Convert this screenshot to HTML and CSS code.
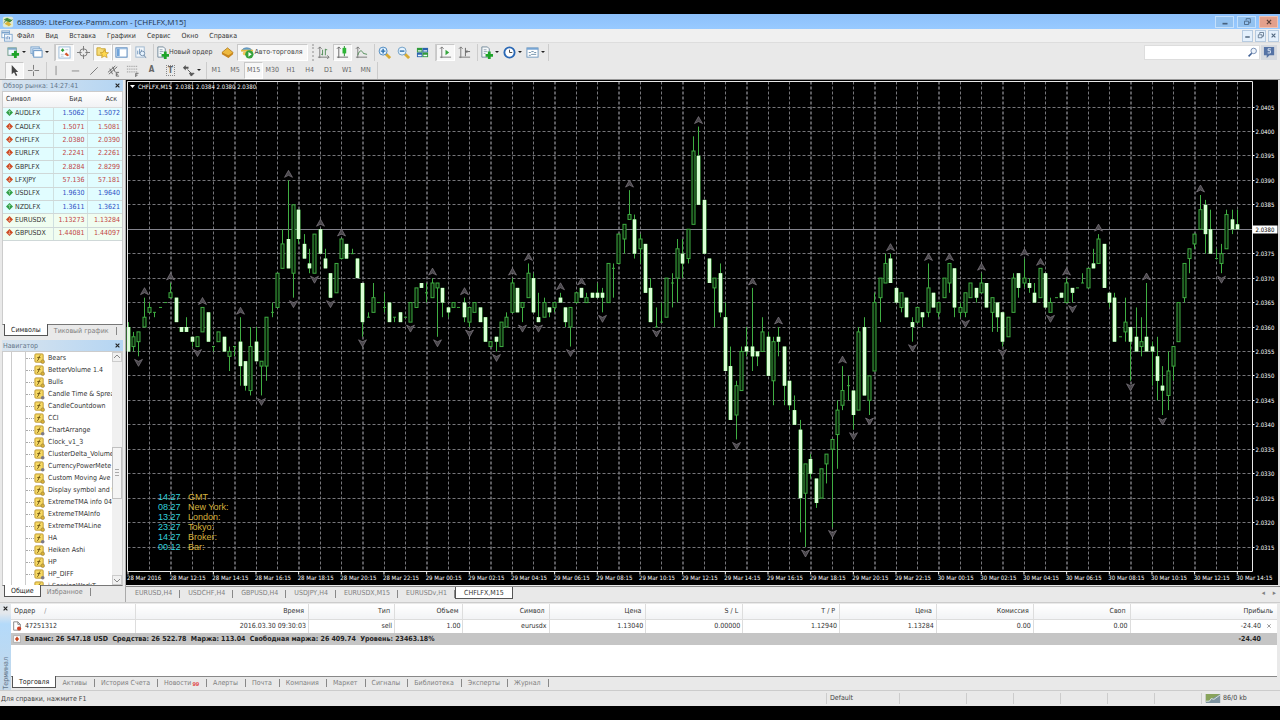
FILE: index.html
```html
<!DOCTYPE html>
<html lang="ru">
<head>
<meta charset="utf-8">
<title>688809: LiteForex-Pamm.com - [CHFLFX,M15]</title>
<link rel="stylesheet" href="styles.css">
</head>
<body>
<svg class="sprite" aria-hidden="true">
  <symbol id="logo" viewBox="0 0 14 14"><rect x="1" y="1" width="12" height="12" rx="2" fill="#dfe9d2"/><path d="M2 4l4-2 6 3-4 3z" fill="#4e9a3a"/><path d="M3 9l4-3 4 4-3 2z" fill="#d9b53a"/><path d="M2 8l4-4 3 3 3-3" fill="none" stroke="#3b6e3b"/></symbol>
  <symbol id="mdi" viewBox="0 0 14 14"><rect x="1" y="1" width="9" height="8" fill="#fff" stroke="#7ba3cc"/><path d="M1 3h9" stroke="#7ba3cc" stroke-width="2"/><rect x="4" y="5" width="9" height="8" fill="#f4f9ff" stroke="#7ba3cc"/><path d="M6 11V8m2 3V7m2 4V8" stroke="#5b87b8"/></symbol>
  <symbol id="newchart" viewBox="0 0 14 14"><rect x="1" y="2" width="9" height="8" fill="#eef6ff" stroke="#6c9a86"/><path d="M1 3h9" stroke="#7fa9c8" stroke-width="2"/><path d="M9 5v8M5 9h8" stroke="#1fa32a" stroke-width="3"/></symbol>
  <symbol id="profiles" viewBox="0 0 14 14"><rect x="1" y="1" width="9" height="7" fill="#dcebfa" stroke="#7ba3cc"/><rect x="3" y="3" width="9" height="7" fill="#e8f3fd" stroke="#7ba3cc"/><rect x="4" y="5" width="9" height="7" fill="#fff" stroke="#5f8fc0"/></symbol>
  <symbol id="market" viewBox="0 0 14 14"><rect x="1" y="1" width="12" height="12" fill="#fbfdff" stroke="#9bbbd8"/><path d="M3 4.500l2-2 2 2-2 2z" fill="#2f9e35"/><path d="M7 9l2-2 3 3-2 1z" fill="#d4572c"/><path d="M8 4h3M3 9h3M3 11h3" stroke="#b9cbd9"/></symbol>
  <symbol id="target" viewBox="0 0 14 14"><circle cx="7" cy="7" r="4" fill="none" stroke="#777"/><path d="M7 0v5M7 9v5M0 7h5M9 7h5" stroke="#777"/></symbol>
  <symbol id="folder" viewBox="0 0 14 14"><path d="M1 2h4l1 1h4v7H1z" fill="#f5dc78" stroke="#c9a22e"/><path d="M9 4l1.500 3 3 .3-2.300 2 .8 3.200L9 11l-3 1.500.8-3.200-2.300-2 3-.3z" fill="#ffd84d" stroke="#c08f1d" stroke-width=".7"/></symbol>
  <symbol id="terminal" viewBox="0 0 14 14"><rect x="1" y="2" width="12" height="10" fill="#fff" stroke="#4b7fb8"/><rect x="2" y="3" width="3" height="8" fill="#6fa3da"/><path d="M2 3h10" stroke="#86b1dd"/></symbol>
  <symbol id="tester" viewBox="0 0 14 14"><rect x="2" y="1" width="9" height="11" fill="#f4f8fc" stroke="#9bb5ce"/><path d="M4 9V5m2 4V3m2 4V4" stroke="#7196bb"/><circle cx="9" cy="8" r="2.500" fill="#e6f2fd" stroke="#7590ad"/><path d="M11 10l2 3" stroke="#7590ad"/></symbol>
  <symbol id="order" viewBox="0 0 14 14"><path d="M2 1h6l2 2v9H2z" fill="#f5f8fa" stroke="#72899b"/><path d="M4 4h3M4 6h4M4 8h2" stroke="#96a8b5"/><path d="M10 6v8M6 10h8" stroke="#1fa32a" stroke-width="3"/></symbol>
  <symbol id="book" viewBox="0 0 14 14"><path d="M1 7l6-5 6 5-5 5z" fill="#edb93f" stroke="#a8741a" stroke-width=".8"/><path d="M1 7l7 3 5-3v2l-5 4-7-4z" fill="#c8861e"/></symbol>
  <symbol id="auto" viewBox="0 0 14 14"><path d="M1 5c1-4 9-4 11 0z" fill="#6aa9d8" stroke="#40729b" stroke-width=".7"/><path d="M0 5h13" stroke="#e8bc42" stroke-width="2"/><circle cx="4" cy="8" r="2" fill="#f1c75b"/><circle cx="9" cy="9" r="4.500" fill="#37a23c"/><path d="M8 6.500v5l3.500-2.500z" fill="#fff"/></symbol>
  <symbol id="bars" viewBox="0 0 14 14"><path d="M3 1v12M1 12h12M1 3l2-2 2 2M11 10l2 2-2 2" fill="none" stroke="#777"/><path d="M6 4v6M4.500 9H6M9 3v7M9 4h2" stroke="#4f8a55" fill="none"/></symbol>
  <symbol id="candle" viewBox="0 0 14 14"><path d="M3 1v12M1 12h12M1 3l2-2 2 2" fill="none" stroke="#666"/><path d="M9 0v11" stroke="#1d8a25"/><rect x="7" y="2" width="4" height="6" fill="#2cb535"/></symbol>
  <symbol id="line" viewBox="0 0 14 14"><path d="M3 1v12M1 12h12M1 3l2-2 2 2" fill="none" stroke="#777"/><path d="M3 10c2-7 5-5 6-2l4 1" fill="none" stroke="#4f8a55"/></symbol>
  <symbol id="zoomin" viewBox="0 0 14 14"><path d="M8 8l5 5" stroke="#d8ab34" stroke-width="3"/><circle cx="5.500" cy="5.500" r="4.300" fill="#e4f3ff" stroke="#4785bd"/><path d="M5.500 3v5M3 5.500h5" stroke="#2a6fae" stroke-width="1.500"/></symbol>
  <symbol id="zoomout" viewBox="0 0 14 14"><path d="M8 8l5 5" stroke="#d8ab34" stroke-width="3"/><circle cx="5.500" cy="5.500" r="4.300" fill="#e4f3ff" stroke="#6c9cc4"/><path d="M3 5.500h5" stroke="#2a6fae" stroke-width="1.500"/></symbol>
  <symbol id="tile" viewBox="0 0 14 14"><rect x="1" y="2" width="6" height="5" fill="#2f9b3b"/><rect x="7" y="2" width="6" height="5" fill="#2a62ae"/><rect x="1" y="7" width="6" height="5" fill="#2a62ae"/><rect x="7" y="7" width="6" height="5" fill="#2f9b3b"/><path d="M2 4.500h4v1.500H2zM8 4.500h4v1.500H8zM2 9.500h4V11H2zM8 9.500h4V11H8z" fill="#eef6ff"/></symbol>
  <symbol id="scroll" viewBox="0 0 14 14"><path d="M3 1v12M1 12h12M1 3l2-2 2 2" fill="none" stroke="#777"/><path d="M7 4v6l4-3z" fill="#35a53c"/></symbol>
  <symbol id="shift" viewBox="0 0 14 14"><path d="M3 1v12M1 12h12M1 3l2-2 2 2" fill="none" stroke="#777"/><path d="M8 2v9M8 6h5M10 4.500L8.500 6 10 7.500" stroke="#666" fill="none"/></symbol>
  <symbol id="clock" viewBox="0 0 14 14"><circle cx="7" cy="7" r="5.500" fill="#fff" stroke="#2a68b5" stroke-width="2"/><path d="M7 4v3h3" fill="none" stroke="#444"/></symbol>
  <symbol id="template" viewBox="0 0 14 14"><rect x="1" y="2" width="12" height="10" fill="#fff" stroke="#6f97bd"/><path d="M1 3h12" stroke="#76a5d4" stroke-width="2"/><path d="M3 7h2l1-1h2l1 1h2M3 10h2l1-1h5" fill="none" stroke="#6d8ea8"/></symbol>
  <symbol id="cursor" viewBox="0 0 14 14"><path d="M4 1v10l2.500-2 2 4 1.500-.8-2-3.700H11z" fill="#444"/></symbol>
  <symbol id="cross" viewBox="0 0 14 14"><path d="M7 1v5M7 8v5M1 7h5M8 7h5" stroke="#777"/></symbol>
  <symbol id="vline" viewBox="0 0 14 14"><path d="M6.500 2v10" stroke="#888"/></symbol>
  <symbol id="hline" viewBox="0 0 14 14"><path d="M3 7.500h8" stroke="#888"/></symbol>
  <symbol id="trend" viewBox="0 0 14 14"><path d="M2.500 11.500l8-8" stroke="#777"/></symbol>
  <symbol id="channel" viewBox="0 0 14 14"><path d="M1 9l8-7M2 11l9-8M3 5l3 6M6 3l3 6M13 9h-3v4h3M10 11h2" fill="none" stroke="#666"/></symbol>
  <symbol id="fibo" viewBox="0 0 14 14"><path d="M1 2.500h11M1 5.500h11M1 8.500h11" stroke="#888" stroke-dasharray="1 1"/><path d="M10.500 14v-4h3M10.500 12h2" fill="none" stroke="#666"/></symbol>
  <symbol id="arrows" viewBox="0 0 14 14"><path d="M1 4l3-3v2h3v2H4v2z" fill="#555"/><path d="M6 6l4 4M13 10l-3 3-2-3z" stroke="#555" fill="#555"/></symbol>
  <symbol id="up" viewBox="0 0 8 8"><path d="M4 0l4 4-4 4-4-4z" fill="#2f9e45"/><path d="M4 2v4M2.500 3.500L4 2l1.500 1.500" stroke="#dff5df" stroke-width=".5" fill="none"/></symbol>
  <symbol id="down" viewBox="0 0 8 8"><path d="M4 0l4 4-4 4-4-4z" fill="#cc4a24"/><path d="M4 2v4M2.500 4.500L4 6l1.500-1.500" stroke="#ffe0d0" stroke-width=".5" fill="none"/></symbol>
  <symbol id="fx" viewBox="0 0 12 12"><rect x="1" y="1" width="9" height="9" rx="1" fill="#f6d964" stroke="#b9932a"/><path d="M7 2.500c-2 0-1.500 6-3.500 6M3.500 5h3.500" fill="none" stroke="#6d5312"/><circle cx="9.500" cy="9.500" r="2" fill="#d9b037" stroke="#8a7433" stroke-width=".6"/></symbol>
  <symbol id="fxg" viewBox="0 0 12 12"><rect x="1" y="1" width="9" height="9" rx="1" fill="#f6d964" stroke="#b9932a"/><path d="M7 2.500c-2 0-1.500 6-3.500 6M3.500 5h3.500" fill="none" stroke="#6d5312"/><circle cx="9.500" cy="9.500" r="2" fill="#7d7a86"/></symbol>
  <symbol id="sellorder" viewBox="0 0 12 12"><path d="M2 1h5l3 3v7H2z" fill="#fff" stroke="#777"/><path d="M7 1v3h3" fill="none" stroke="#777"/><circle cx="8.500" cy="9" r="2.500" fill="#cf4126"/></symbol>
  <symbol id="balance" viewBox="0 0 12 12"><rect x="2" y="2" width="8" height="8" fill="#fff" stroke="#aaa"/><path d="M6 3l2.500 3L6 9 3.500 6z" fill="#c8451e"/></symbol>
  <symbol id="search" viewBox="0 0 14 14"><circle cx="8.500" cy="5" r="3.500" fill="#eef4fb" stroke="#5c78a5"/><path d="M6 8l-4 4" stroke="#3f5f94" stroke-width="2"/></symbol>
  <symbol id="chat" viewBox="0 0 14 14"><path d="M1 1h11v9H7l-3 3v-3H1z" fill="#5573a5"/><path d="M8.500 3h-3v2h2.500v2.500H5" stroke="#dfe8f5" fill="none"/></symbol>
  <symbol id="net" viewBox="0 0 16 10"><rect width="16" height="10" fill="#7d93a0"/><path d="M0 0h16L0 9z" fill="#88a35b"/><path d="M0 8h4l2-3 3 1 7-5" stroke="#dfe9dc" fill="none"/></symbol>
  <symbol id="min" viewBox="0 0 12 12"><path d="M3 8h6" stroke="currentColor" stroke-width="2"/></symbol>
  <symbol id="restore" viewBox="0 0 12 12"><path d="M5 4V2h5v5H8M3 5h5v4H3z" fill="none" stroke="currentColor"/></symbol>
  <symbol id="close" viewBox="0 0 12 12"><path d="M3.500 3.500l5 5M8.500 3.500l-5 5" stroke="currentColor" stroke-width="1.500"/></symbol>
</svg>

<div class="app">
  <header class="titlebar">
    <svg class="icon"><use href="#logo"/></svg>
    <h1 class="title">688809: LiteForex-Pamm.com - [CHFLFX,M15]</h1>
    <button class="win" aria-label="Свернуть"><svg><use href="#min"/></svg></button>
    <button class="win" aria-label="Восстановить"><svg><use href="#restore"/></svg></button>
    <button class="win win-close" aria-label="Закрыть"><svg><use href="#close"/></svg></button>
  </header>

  <nav class="menubar">
    <svg class="icon"><use href="#mdi"/></svg>
    <div class="menus"><button>Файл</button><button>Вид</button><button>Вставка</button><button>Графики</button><button>Сервис</button><button>Окно</button><button>Справка</button></div>
    <div class="mdi">
      <button aria-label="Свернуть окно"><svg><use href="#min"/></svg></button>
      <button aria-label="Восстановить окно"><svg><use href="#restore"/></svg></button>
      <button aria-label="Закрыть окно"><svg><use href="#close"/></svg></button>
    </div>
  </nav>

  <div class="toolbars">
    <div class="toolrow">
      <div class="group">
        <button class="tool drop" aria-label="Новый график"><svg class="icon"><use href="#newchart"/></svg></button>
        <button class="tool drop" aria-label="Профили"><svg class="icon"><use href="#profiles"/></svg></button>
      </div>
      <div class="group sep">
        <button class="tool on" aria-label="Обзор рынка"><svg class="icon"><use href="#market"/></svg></button>
        <button class="tool" aria-label="Окно данных"><svg class="icon"><use href="#target"/></svg></button>
        <button class="tool on" aria-label="Навигатор"><svg class="icon"><use href="#folder"/></svg></button>
        <button class="tool on" aria-label="Терминал"><svg class="icon"><use href="#terminal"/></svg></button>
        <button class="tool" aria-label="Тестер"><svg class="icon"><use href="#tester"/></svg></button>
      </div>
      <div class="group sep">
        <button class="tool wide"><svg class="icon"><use href="#order"/></svg>Новый ордер</button>
        <button class="tool" aria-label="MetaEditor"><svg class="icon"><use href="#book"/></svg></button>
        <button class="tool wide on"><svg class="icon"><use href="#auto"/></svg>Авто-торговля</button>
      </div>
      <div class="group grip">
        <button class="tool" aria-label="Бары"><svg class="icon"><use href="#bars"/></svg></button>
        <button class="tool on" aria-label="Свечи"><svg class="icon"><use href="#candle"/></svg></button>
        <button class="tool" aria-label="Линия"><svg class="icon"><use href="#line"/></svg></button>
      </div>
      <div class="group sep">
        <button class="tool" aria-label="Увеличить"><svg class="icon"><use href="#zoomin"/></svg></button>
        <button class="tool" aria-label="Уменьшить"><svg class="icon"><use href="#zoomout"/></svg></button>
        <button class="tool" aria-label="Окна"><svg class="icon"><use href="#tile"/></svg></button>
      </div>
      <div class="group sep">
        <button class="tool on" aria-label="Автопрокрутка"><svg class="icon"><use href="#scroll"/></svg></button>
        <button class="tool" aria-label="Сдвиг графика"><svg class="icon"><use href="#shift"/></svg></button>
      </div>
      <div class="group sep last">
        <button class="tool drop" aria-label="Индикаторы"><svg class="icon"><use href="#order"/></svg></button>
        <button class="tool drop" aria-label="Периоды"><svg class="icon"><use href="#clock"/></svg></button>
        <button class="tool drop" aria-label="Шаблоны"><svg class="icon"><use href="#template"/></svg></button>
      </div>
      <div class="search">
        <input type="text" aria-label="Поиск">
        <svg class="icon"><use href="#search"/></svg>
        <button class="chat" aria-label="Сообщения"><svg class="icon"><use href="#chat"/></svg></button>
      </div>
    </div>
    <div class="toolrow">
      <div class="group">
        <button class="tool on" aria-label="Курсор"><svg class="icon"><use href="#cursor"/></svg></button>
        <button class="tool" aria-label="Перекрестие"><svg class="icon"><use href="#cross"/></svg></button>
      </div>
      <div class="group sep">
        <button class="tool" aria-label="Вертикальная линия"><svg class="icon"><use href="#vline"/></svg></button>
        <button class="tool" aria-label="Горизонтальная линия"><svg class="icon"><use href="#hline"/></svg></button>
        <button class="tool" aria-label="Трендовая линия"><svg class="icon"><use href="#trend"/></svg></button>
        <button class="tool" aria-label="Канал"><svg class="icon"><use href="#channel"/></svg></button>
        <button class="tool" aria-label="Фибоначчи"><svg class="icon"><use href="#fibo"/></svg></button>
        <button class="tool letter">A</button>
        <button class="tool letter"><span class="boxed">T</span></button>
        <button class="tool drop" aria-label="Стрелки"><svg class="icon"><use href="#arrows"/></svg></button>
      </div>
      <div class="group sep frames">
        <button class="tool">M1</button><button class="tool">M5</button><button class="tool on">M15</button><button class="tool">M30</button><button class="tool">H1</button><button class="tool">H4</button><button class="tool">D1</button><button class="tool">W1</button><button class="tool">MN</button>
      </div>
    </div>
  </div>

  <main class="workspace">
    <aside class="side">
      <section class="panel">
        <header class="panelhead"><h2>Обзор рынка: 14:27:41</h2><button aria-label="Закрыть обзор рынка"><svg><use href="#close"/></svg></button></header>
        <div class="panelbody">
          <table class="quotes">
            <thead><tr><th>Символ</th><th>Бид</th><th>Аск</th></tr></thead>
            <tbody>
              <tr class="rise"><td><svg><use href="#up"/></svg>AUDLFX</td><td>1.5062</td><td>1.5072</td></tr>
              <tr><td><svg><use href="#down"/></svg>CADLFX</td><td>1.5071</td><td>1.5081</td></tr>
              <tr><td><svg><use href="#down"/></svg>CHFLFX</td><td>2.0380</td><td>2.0390</td></tr>
              <tr><td><svg><use href="#down"/></svg>EURLFX</td><td>2.2241</td><td>2.2261</td></tr>
              <tr><td><svg><use href="#down"/></svg>GBPLFX</td><td>2.8284</td><td>2.8299</td></tr>
              <tr><td><svg><use href="#down"/></svg>LFXJPY</td><td>57.136</td><td>57.181</td></tr>
              <tr class="rise"><td><svg><use href="#up"/></svg>USDLFX</td><td>1.9630</td><td>1.9640</td></tr>
              <tr class="rise"><td><svg><use href="#up"/></svg>NZDLFX</td><td>1.3611</td><td>1.3621</td></tr>
              <tr class="pale"><td><svg><use href="#down"/></svg>EURUSDX</td><td>1.13273</td><td>1.13284</td></tr>
              <tr class="pale"><td><svg><use href="#down"/></svg>GBPUSDX</td><td>1.44081</td><td>1.44097</td></tr>
            </tbody>
          </table>
        </div>
        <div class="tabs"><button class="tab active">Символы</button><button class="tab">Тиковый график</button></div>
      </section>
      <section class="panel">
        <header class="panelhead"><h2>Навигатор</h2><button aria-label="Закрыть навигатор"><svg><use href="#close"/></svg></button></header>
        <div class="panelbody navbody">
          <ul class="tree">
            <li><svg><use href="#fx"/></svg>Bears</li>
            <li><svg><use href="#fx"/></svg>BetterVolume 1.4</li>
            <li><svg><use href="#fx"/></svg>Bulls</li>
            <li><svg><use href="#fxg"/></svg>Candle Time &amp; Sprea</li>
            <li><svg><use href="#fx"/></svg>CandleCountdown</li>
            <li><svg><use href="#fx"/></svg>CCI</li>
            <li><svg><use href="#fxg"/></svg>ChartArrange</li>
            <li><svg><use href="#fx"/></svg>Clock_v1_3</li>
            <li><svg><use href="#fxg"/></svg>ClusterDelta_Volume</li>
            <li><svg><use href="#fxg"/></svg>CurrencyPowerMete</li>
            <li><svg><use href="#fx"/></svg>Custom Moving Ave</li>
            <li><svg><use href="#fx"/></svg>Display symbol and t</li>
            <li><svg><use href="#fx"/></svg>ExtremeTMA info 04</li>
            <li><svg><use href="#fx"/></svg>ExtremeTMAInfo</li>
            <li><svg><use href="#fx"/></svg>ExtremeTMALine</li>
            <li><svg><use href="#fxg"/></svg>HA</li>
            <li><svg><use href="#fx"/></svg>Heiken Ashi</li>
            <li><svg><use href="#fx"/></svg>HP</li>
            <li><svg><use href="#fxg"/></svg>HP_DIFF</li>
            <li><svg><use href="#fx"/></svg>i-SessionWorkT</li>
          </ul>
          <div class="scrollbar"><button aria-label="Вверх"><svg viewBox="0 0 8 8"><path d="M1 5l3-3 3 3"/></svg></button><span class="thumb"></span><button aria-label="Вниз"><svg viewBox="0 0 8 8"><path d="M1 3l3 3 3-3"/></svg></button></div>
        </div>
        <div class="tabs"><button class="tab active">Общие</button><button class="tab">Избранное</button></div>
      </section>
    </aside>

    <section class="chartpane">
      <div class="chart">
        <svg id="plot" class="plot"></svg>
        <dl class="clocks">
          <dt>14:27</dt><dd>GMT</dd>
          <dt>08:27</dt><dd>New York:</dd>
          <dt>13:27</dt><dd>London:</dd>
          <dt>23:27</dt><dd>Tokyo:</dd>
          <dt>14:27</dt><dd>Broker:</dd>
          <dt>00:12</dt><dd>Bar:</dd>
        </dl>
      </div>
      <div class="charttabs">
        <button>EURUSD,H4</button><button>USDCHF,H4</button><button>GBPUSD,H4</button><button>USDJPY,H4</button><button>EURUSDX,M15</button><button>EURUSDv,H1</button><button class="active">CHFLFX,M15</button>
        <span class="arrows"><span>◂</span><span>▸</span></span>
      </div>
    </section>
  </main>

  <section class="terminal">
    <div class="termside"><button aria-label="Закрыть терминал"><svg><use href="#close"/></svg></button><h2>Терминал</h2></div>
    <div class="termmain">
      <table class="orders">
        <colgroup><col class="c-order"><col class="c-time"><col class="c-type"><col class="c-vol"><col class="c-sym"><col class="c-num"><col class="c-num"><col class="c-num"><col class="c-num"><col class="c-num"><col class="c-num"><col></colgroup>
        <thead><tr><th>Ордер<span class="sort">∕</span></th><th>Время</th><th>Тип</th><th>Объем</th><th>Символ</th><th>Цена</th><th>S / L</th><th>T / P</th><th>Цена</th><th>Комиссия</th><th>Своп</th><th>Прибыль</th></tr></thead>
        <tbody>
          <tr><td><svg><use href="#sellorder"/></svg>47251312</td><td>2016.03.30 09:30:03</td><td>sell</td><td>1.00</td><td>eurusdx</td><td>1.13040</td><td>0.00000</td><td>1.12940</td><td>1.13284</td><td>0.00</td><td>0.00</td><td>-24.40<button class="closeorder" aria-label="Закрыть ордер"><svg><use href="#close"/></svg></button></td></tr>
          <tr class="total"><td colspan="11"><svg><use href="#balance"/></svg>Баланс: 26 547.18 USD&nbsp; Средства: 26 522.78&nbsp; Маржа: 113.04&nbsp; Свободная маржа: 26 409.74&nbsp; Уровень: 23463.18%</td><td>-24.40</td></tr>
        </tbody>
      </table>
      <div class="blank"></div>
      <div class="tabs termtabs">
        <button class="tab active">Торговля</button><button class="tab">Активы</button><button class="tab">История Счета</button><button class="tab">Новости<sub>99</sub></button><button class="tab">Алерты</button><button class="tab">Почта</button><button class="tab">Компания</button><button class="tab">Маркет</button><button class="tab">Сигналы</button><button class="tab">Библиотека</button><button class="tab">Эксперты</button><button class="tab">Журнал</button>
      </div>
    </div>
  </section>

  <footer class="status">
    <span class="help">Для справки, нажмите F1</span>
    <span class="cell profile">Default</span><span class="cell first"></span><span class="cell"></span><span class="cell"></span><span class="cell"></span><span class="cell"></span><span class="cell"></span>
    <span class="cell net"><svg><use href="#net"/></svg>86/0 kb</span>
  </footer>
</div>
<script src="chart.js"></script>
</body>
</html>
```
FILE: styles.css
```css
* { box-sizing: border-box; }
body { margin: 0; padding: 14px 0; background: #000; color: #333; font: 7px/12px "DejaVu Sans Condensed", "DejaVu Sans", sans-serif; font-stretch: condensed; }
button, input { margin: 0; padding: 0; border: 0; background: none; font: inherit; color: inherit; }
h1, h2, dl, dd, ul { margin: 0; padding: 0; font: inherit; }
table { border-collapse: collapse; border-spacing: 0; }
th { font-weight: normal; }
svg { display: block; flex: none; }
.sprite { position: absolute; width: 0; height: 0; }
.icon { width: 13px; height: 13px; }

.app { display: flex; flex-direction: column; min-height: calc(100vh - 28px); background: #e9e9e9; }

.titlebar { display: flex; align-items: center; gap: 3px; height: 15px; padding: 0 2px; background: linear-gradient(#8cc0fb, #98caff); color: #1c3048; }
.titlebar .icon { width: 12px; height: 12px; }
.title { flex: 1; font: 8px/13px "Open Sans", sans-serif; }
.win { display: flex; justify-content: center; align-items: center; width: 19px; height: 12px; border: 1px solid #c4e0fc; background: #93c2f0; color: #47617e; }
.win svg { width: 10px; height: 10px; }
.win-close { background: #e3a08c; border-color: #efc3b4; color: #5c3f38; }

.menubar { display: flex; align-items: center; height: 14px; padding-left: 1px; background: #f0f0f0; border-bottom: 1px solid #ddd; }
.menubar > .icon { width: 12px; height: 12px; }
.menus { display: flex; gap: 3px; }
.menus button { padding: 0 4px; }
.mdi { display: flex; gap: 2px; margin-left: auto; padding-right: 1px; }
.mdi button { width: 11px; height: 12px; border: 1px solid #b7cbe0; background: #e4f0fc; color: #51677f; }
.mdi svg { width: 9px; height: 9px; }

.toolbars { background: #e9e9e9; border-bottom: 1px solid #999; }
.toolrow { display: flex; align-items: center; height: 18px; padding-left: 5px; }
.group { display: flex; align-items: center; }
.sep { margin-left: 3px; border-left: 1px solid #ccc; }
.grip { margin-left: 4px; border-left: 2px dotted #bbb; }
.last { padding-right: 1px; border-right: 1px solid #ccc; }
.tool { display: flex; align-items: center; justify-content: center; width: 19px; height: 17px; border: 1px solid transparent; color: #444; }
.tool.on { background: #f7f7f7; border-color: #c8c8c8 #fff #fff #c8c8c8; }
.tool.wide { width: auto; padding: 0 5px 0 1px; white-space: nowrap; }
.tool.wide.on { padding-left: 3px; }
.tool.drop { width: 23px; }
.drop::after { content: ""; margin-left: 2px; border: 2px solid transparent; border-top-color: #222; border-bottom: 0; }
.letter { color: #666; font-size: 8px; font-weight: bold; }
.boxed { border: 1px dotted #888; width: 9px; line-height: 9px; }
.frames { display: grid; grid-template-columns: repeat(9, 1fr); width: 172px; padding-right: 2px; border-right: 1px solid #ccc; }
.frames .tool { width: auto; color: #666; }
.search { display: flex; align-items: center; margin-left: auto; margin-right: 3px; }
.search input { width: 116px; height: 15px; padding: 0 14px 0 2px; background: #fff; border: 1px solid #ddd; }
.search > .icon { width: 11px; height: 11px; margin-left: -13px; margin-right: 2px; }
.chat { display: flex; align-items: center; justify-content: center; width: 16px; height: 15px; background: #d5d9df; margin-left: 1px; }

.workspace { display: grid; grid-template-columns: 126px minmax(0, 1fr); flex: 1; }
.side { display: grid; grid-template-columns: minmax(0, 1fr); grid-template-rows: 258px minmax(0, 1fr); gap: 2px; padding: 0 2px 3px 2px; border-right: 1px solid #aaa; }
.panel { display: flex; flex-direction: column; min-height: 0; }
.panelhead { display: flex; align-items: center; justify-content: space-between; height: 11px; padding-left: 1px; background: linear-gradient(90deg, #d9e4ee, #b4d5f3); color: #63758a; }
.panelhead button { width: 10px; height: 10px; color: #222; }
.panelhead svg, .termside svg { width: 9px; height: 9px; }
.panelbody { flex: 1; min-height: 0; background: #fff; border: 1px solid #ccc; border-bottom: 1px solid #777; overflow: hidden; }

.quotes { width: 100%; height: 149px; table-layout: fixed; line-height: 11px; }
.quotes th { height: 15px; padding: 0 5px 0 0; text-align: right; background: linear-gradient(#fff, #f1f2f4); border-bottom: 1px solid #ddd; }
.quotes th:first-child { width: 50px; padding-left: 3px; text-align: left; }
.quotes th:nth-child(2) { width: 34px; }
.quotes td { padding: 0 2px 0 0; text-align: right; background: #e1fdff; border-bottom: 1px solid #cfd8d8; border-left: 1px solid #cfe0e0; color: #c04444; }
.quotes td:first-child { padding-left: 3px; border-left: 0; text-align: left; color: #333; white-space: nowrap; }
.quotes td svg { display: inline-block; width: 7px; height: 7px; margin-right: 2px; vertical-align: -1px; }
.quotes .rise td + td { color: #2c4fc4; }
.quotes .pale td { background: #f0fdf0; }

.tabs { display: flex; height: 13px; padding-left: 2px; }
.tab { display: flex; align-items: center; height: 11px; padding: 0 6px; color: #808080; white-space: nowrap; }
.tab:not(.active)::after { content: ""; margin-left: 7px; margin-right: -6px; height: 8px; border-right: 1px solid #888; }
.tab.active { height: 12px; margin-top: -1px; background: #fff; border: 1px solid #555; border-top: 0; color: #222; }

.navbody { display: flex; contain: size; }
.tree { flex: 1; min-width: 0; padding: 0 0 0 11px; list-style: none; overflow: hidden; background: linear-gradient(90deg, transparent 8px, #ccc 8px, #ccc 9px, transparent 9px, transparent 22px, #ccc 22px, #ccc 23px, transparent 23px); }
.tree li { display: flex; align-items: center; height: 12px; padding-left: 12px; white-space: nowrap; color: #333; }
.tree li::before { content: ""; flex: none; width: 8px; border-top: 1px dotted #aaa; }
.tree svg { width: 11px; height: 11px; margin-right: 3px; }
.scrollbar { display: flex; flex: none; flex-direction: column; justify-content: space-between; width: 10px; background: #f0f0f0; }
.scrollbar button { width: 10px; height: 10px; border: 1px solid #ccc; }
.scrollbar svg { width: 8px; height: 8px; fill: none; stroke: #888; }
.thumb { height: 52px; margin-top: 8px; border: 1px solid #c0c0c0; background: linear-gradient(transparent 21px, #aaa 21px, #aaa 22px, transparent 22px, transparent 24px, #aaa 24px, #aaa 25px, transparent 25px, transparent 27px, #aaa 27px, #aaa 28px, transparent 28px) 2px 0 / 4px 50px no-repeat, #f4f4f4; }

.chartpane { display: flex; flex-direction: column; min-width: 0; }
.chart { position: relative; background: #000; border-right: 2px solid #ddd; }
.plot { width: 100%; height: 505px; }
.plot text { font: 6px "DejaVu Sans Condensed", "DejaVu Sans", sans-serif; font-stretch: condensed; fill: #fff; }
.plot .nowtext { fill: #000; }
.clocks { position: absolute; left: 32px; top: 412px; display: grid; grid-template-columns: 30px auto; font: 9px/10px "Liberation Sans", Arial, sans-serif; }
.clocks dt { color: #32d2dc; }
.clocks dd { color: #d5b13c; }
.charttabs { display: flex; align-items: flex-start; height: 16px; margin-top: 1px; border-top: 1px solid #888; color: #808080; }
.charttabs button { height: 12px; padding: 0 8px; }
.charttabs button:not(.active) { background: linear-gradient(#888, #888) right 3px / 1px 8px no-repeat; }
.charttabs button:first-child { padding-left: 9px; }
.charttabs .active { border: 1px solid #555; border-top: 0; background: #fff; color: #333; }
.arrows { display: flex; gap: 8px; margin-left: auto; padding-right: 4px; }

.terminal { display: flex; height: 88px; padding-top: 1px; border-top: 1px solid #ccc; }
.termside { display: flex; flex-direction: column; align-items: center; justify-content: space-between; width: 11px; background: linear-gradient(#e4e8ec 9px, #b4dafa 20px, #c5d8e8); color: #63758a; }
.termside button { height: 9px; color: #222; }
.termside h2 { writing-mode: vertical-rl; transform: rotate(180deg); line-height: 10px; }
.termmain { display: flex; flex: 1; flex-direction: column; min-width: 0; padding-right: 3px; }
.orders { width: 100%; table-layout: fixed; background: #fff; line-height: 12px; }
.c-order { width: 9.8%; } .c-time { width: 13.7%; } .c-type { width: 6.8%; } .c-vol { width: 5.4%; } .c-sym { width: 6.8%; } .c-num { width: 7.65%; }
.orders th, .orders td { padding: 0 2px 0 0; text-align: right; white-space: nowrap; border-right: 1px solid #ddd; }
.orders th { height: 15px; padding-right: 4px; background: linear-gradient(#fff, #f2f3f5); border-bottom: 1px solid #ddd; }
.orders th:first-child, .orders td:first-child { text-align: left; padding-left: 3px; }
.orders th:last-child, .orders td:last-child { border-right: 0; }
.orders td { height: 14px; }
.orders td svg { display: inline-block; width: 10px; height: 10px; margin-right: 3px; margin-left: -2px; vertical-align: -3px; }
.orders td:last-child { padding-right: 16px; }
.sort { margin-left: 9px; color: #888; }
.closeorder { width: 10px; margin-right: -13px; margin-left: 3px; line-height: 10px; color: #999; }
.orders .closeorder svg { width: 8px; height: 8px; margin: 0; vertical-align: -2px; }
.orders .total td { height: 12px; background: #c5c5c5; border: 0; color: #222; font-weight: bold; }
.blank { flex: 1; background: #fff; border-bottom: 1px solid #888; }
.termtabs { padding-left: 1px; }
.termtabs sub { margin: 4px 0 0 1px; color: #e04040; font: bold 6px/7px "Liberation Sans", sans-serif; }

.status { display: flex; align-items: center; height: 16px; border-top: 1px solid #ccc; color: #444; }
.help { flex: 1; padding-left: 1px; }
.cell { width: 47px; height: 11px; border-left: 1px solid #ccc; padding-left: 3px; line-height: 11px; }
.profile { width: 73px; }
.first { width: 67px; }
.net { display: flex; align-items: center; gap: 2px; width: 79px; }
.net svg { width: 16px; height: 9px; }
```
FILE: chart.js
```js
// Bars as "kind high top bottom low", prices in points over 2.0000.
// kind: d = falling bar, u = rising bar, x = doji
const BARS = `d 361 360 355 355,u 359 358 356 355,u 359 359 357 354,u 366 362 360 360,u 365 364 363 363,x 363 363 363 362,x 364 364 364 364,x 365 365 365 365,u 369 367 366 366,d 366 366 361 361,
d 360 360 359 359,d 362 360 359 359,d 358 358 357 356,u 358 358 356 356,u 364 364 359 359,d 363 363 357 357,x 356 356 356 355,u 359 359 357 357,d 358 358 355 355,u 356 355 354 351,
x 356 356 356 354,d 362 357 352 348,d 353 353 348 347,u 360 356 347 346,d 360 357 353 353,u 353 353 352 346,u 362 362 352 349,x 365 363 363 362,u 371 371 364 364,u 380 377 372 372,
d 390 378 372 372,u 385 385 371 366,d 384 384 378 377,d 379 377 374 374,d 376 373 372 371,u 379 379 371 371,d 380 380 375 375,d 376 374 372 372,d 371 371 366 366,u 373 373 367 367,
u 378 378 374 374,d 377 377 374 374,x 376 375 375 375,d 374 374 370 370,d 369 369 361 358,x 363 362 362 362,u 369 366 363 363,x 365 365 365 365,x 367 364 364 363,d 365 365 361 361,
x 362 362 362 361,d 363 363 361 361,x 362 362 362 362,u 365 365 361 361,u 368 368 364 364,d 369 369 368 368,x 369 367 367 365,u 370 369 366 366,u 369 369 368 358,d 368 368 365 362,
d 364 364 363 362,u 365 365 364 364,x 364 364 364 364,d 366 365 362 361,u 364 364 361 360,u 365 365 363 363,d 364 364 361 361,d 362 362 357 357,u 357 357 356 356,d 358 358 357 355,
u 361 361 356 356,u 363 362 360 360,u 370 369 363 363,d 368 368 363 363,u 365 365 364 361,u 373 371 366 366,d 371 370 363 363,d 367 362 361 361,u 366 365 362 362,d 364 364 363 362,
u 365 365 364 363,d 367 366 365 365,d 364 364 361 360,u 364 364 360 356,u 367 367 365 365,d 368 368 366 366,u 367 366 365 365,d 367 367 366 366,d 369 367 366 366,d 368 367 366 363,
u 373 373 365 365,x 373 372 372 366,u 379 379 373 373,u 381 381 378 375,u 388 383 382 382,d 383 382 375 374,u 379 378 376 373,d 377 377 367 367,d 370 368 361 361,x 364 360 360 360,
x 365 361 361 361,u 370 370 362 362,x 371 369 369 364,u 378 376 370 365,d 378 375 373 370,u 380 380 374 373,u 399 396 381 381,d 401 395 385 385,d 386 386 375 375,d 374 374 369 369,
u 370 370 368 360,d 373 371 363 362,d 365 362 351 351,d 356 352 341 341,u 349 348 342 337,u 356 355 347 347,d 360 356 355 354,d 368 356 354 351,d 355 355 354 352,u 362 359 355 355,
d 359 358 350 350,u 358 357 349 344,d 360 358 357 354,d 356 356 348 344,d 349 349 344 343,d 346 343 340 340,d 341 339 325 318,u 332 332 326 315,d 334 333 330 329,d 329 329 324 323,
u 331 331 325 325,u 334 334 332 328,u 337 337 335 319,u 345 343 338 331,u 352 347 344 343,x 350 348 348 345,d 347 347 342 339,u 360 359 343 343,d 362 360 346 346,u 350 350 345 342,
u 367 365 351 351,u 370 370 366 361,u 375 373 369 369,d 375 374 369 369,d 368 368 365 365,u 367 367 364 363,d 366 366 362 362,d 362 361 360 357,u 364 364 361 361,d 363 363 362 360,
u 373 368 363 362,d 367 367 364 364,u 365 365 363 362,u 370 370 366 366,u 373 373 369 367,d 372 372 364 362,u 365 364 363 362,u 367 367 363 362,u 369 369 366 366,d 368 368 366 365,
u 371 369 367 367,d 369 369 364 364,u 366 366 363 359,d 365 365 362 359,d 363 363 357 356,u 362 362 358 358,u 371 370 363 363,d 371 371 368 366,u 374 370 369 368,d 370 369 368 367,
d 369 367 365 365,u 372 372 366 366,d 371 371 364 364,u 366 365 363 363,x 366 366 366 366,d 367 367 366 366,u 370 369 365 365,d 368 368 367 365,x 368 368 368 368,x 371 369 369 369,
u 372 372 368 368,d 376 373 372 372,u 379 378 373 373,d 377 377 368 368,d 367 367 365 364,d 367 366 357 357,x 358 358 358 358,u 366 361 359 357,d 360 360 357 349,d 364 358 355 355,
u 362 357 356 354,d 369 358 355 355,d 357 356 355 348,d 358 354 349 345,d 352 348 347 342,u 355 351 346 343,u 356 356 352 349,u 365 365 357 357,u 373 373 366 365,u 376 376 374 371,
u 379 379 377 376,u 387 384 380 380,d 386 385 379 375,d 384 380 375 375,x 376 374 374 374,u 377 375 373 371,u 384 383 376 376,d 384 382 380 379,d 384 381 380 380`
  .split(",").map(s => { const p = s.trim().split(" "); return [p[0], ...p.slice(1).map(Number)]; });

const UP = [3,8,14,21,30,36,40,57,63,72,75,81,85,94,107,117,122,134,143,150,154,160,168,171,176,182,191,201];
const DOWN = [2,13,25,31,35,38,44,53,58,64,69,74,77,83,89,99,114,127,132,136,139,147,157,164,173,177,188,194,205];
const TIMES = ["28 Mar 2016"];
for (const [day, start] of [["28 Mar", 12], ["29 Mar", 0], ["30 Mar", 0]])
  for (let h = start; h < (day === "30 Mar" ? 15 : 24); h += 2) TIMES.push(`${day} ${String(h).padStart(2, "0")}:15`);

const STEP = 16 / 3, POINT = 4.889, X0 = 2, LEFT = 1.5, TOP = 1.5, BOTTOM = 491.5;
const x = i => X0 + i * STEP;
const y = p => 27 + (405 - p) * POINT;

function draw() {
  const svg = document.getElementById("plot");
  const right = svg.clientWidth - 25.5;
  const out = [];
  const line = (x1, y1, x2, y2, extra) => out.push(`<path d="M${x1} ${y1}L${x2} ${y2}" ${extra}/>`);

  for (let k = 1; x(k * 4) < right; k++) {
    const gx = Math.floor(x(k * 4)), wide = k % 3 === 2;
    line(wide ? gx + 1 : gx + .5, TOP, wide ? gx + 1 : gx + .5, BOTTOM, `stroke="${wide ? "#5c5c60" : "#76767a"}" stroke-width="${wide ? 2 : 1}" stroke-dasharray="3 2"`);
  }
  for (let p = 405; p >= 315; p -= 5) {
    const gy = Math.floor(y(p)) + .5;
    line(LEFT, gy, right, gy, 'stroke="#76767a" stroke-dasharray="3 2"');
    line(right, gy, right + 2, gy, 'stroke="#fff"');
    if (p !== 380) out.push(`<text x="${right + 3}" y="${gy + 2}">2.0${p}</text>`);
  }
  const now = Math.floor(y(380)) + .5;
  line(LEFT, now, right, now, 'stroke="#83838c"');

  const green = 'stroke="#3fae42"';
  BARS.forEach(([kind, high, top, bottom, low], i) => {
    const cx = Math.floor(x(i)), h = y(bottom) - y(top);
    if (high > top) line(cx + .5, y(high), cx + .5, y(top), green);
    if (low < bottom) line(cx + .5, y(bottom), cx + .5, y(low), green);
    if (kind === "x") line(cx - 1, y(top), cx + 2, y(top), green);
    else out.push(kind === "d"
      ? `<rect x="${cx - 1.5}" y="${y(top)}" width="4" height="${h}" fill="#5fce5f"/><rect x="${cx - 1}" y="${y(top)}" width="3" height="${h}" fill="#d9ffd4"/>`
      : `<rect x="${cx - 1}" y="${y(top)}" width="3" height="${h}" fill="#061a06" ${green}/>`);
  });
  const mark = (i, cy, s) => {
    const c = Math.floor(x(i)) + .5;
    out.push(`<path d="M${c - 4} ${cy + 3 * s}L${c} ${cy - 4 * s}L${c + 4} ${cy + 3 * s}L${c} ${cy + s}Z" fill="#4a474c" stroke="#8b858d" stroke-width=".6"/>`);
  };
  UP.forEach(i => mark(i, y(BARS[i][1]) - 6, 1));
  DOWN.forEach(i => mark(i, y(BARS[i][4]) + 6, -1));

  out.push(`<path d="M${LEFT} ${BOTTOM}V${TOP}H${right}V${BOTTOM}Z" fill="none" stroke="#e8e8e8"/>`);
  TIMES.forEach((t, k) => {
    line(x(k * 8), BOTTOM, x(k * 8), BOTTOM + 3, 'stroke="#fff"');
    out.push(`<text x="${x(k * 8) - 1}" y="500">${t}</text>`);
  });
  out.push(`<rect x="${right}" y="${now - 4}" width="25" height="8" fill="#fff"/><text class="nowtext" x="${right + 3}" y="${now + 2}">2.0380</text>`);
  out.push(`<path d="M4 5h5l-2.500 3z" fill="#fff"/><text x="12" y="9" xml:space="preserve">CHFLFX,M15  2.0381 2.0384 2.0380 2.0380</text>`);
  svg.innerHTML = out.join("");
}
draw();
addEventListener("resize", draw);
```
